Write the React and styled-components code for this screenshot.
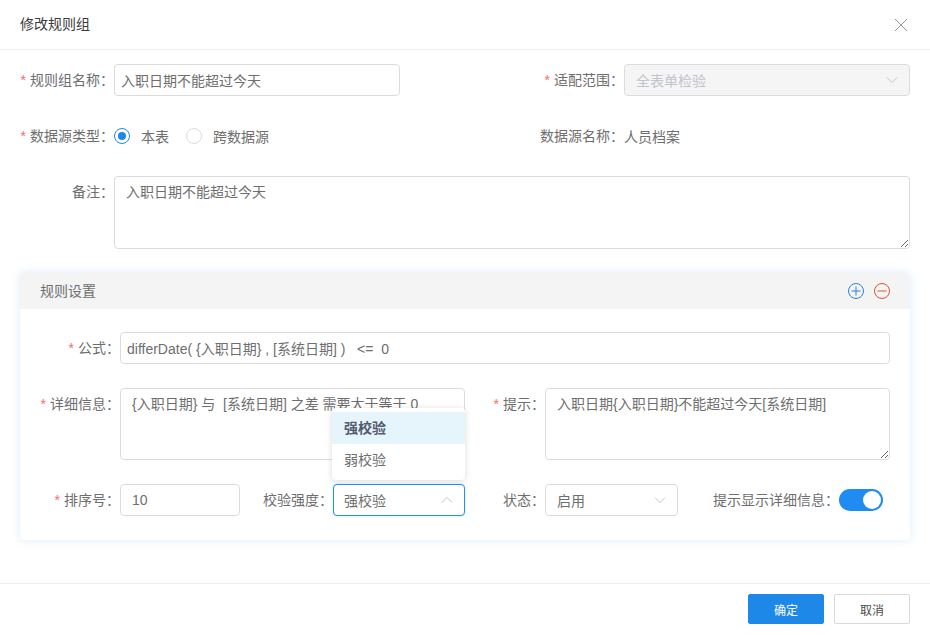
import React from 'react';
import styled, { createGlobalStyle } from 'styled-components';

const Global = createGlobalStyle`
	html, body {
		margin: 0;
		background: #fff;
	}
	* {
		box-sizing: border-box;
	}
	body, input, textarea, button {
		font-family: "Liberation Sans", "Noto Sans CJK SC", sans-serif;
		font-size: 14px;
	}
`;

const Dialog = styled.div`
	display: flex;
	flex-direction: column;
	width: 930px;
	height: 635px;
	overflow: hidden;
	color: #6e6e6e;
`;

const Header = styled.header`
	display: flex;
	align-items: center;
	justify-content: space-between;
	flex: 0 0 50px;
	padding: 0 23px 0 20px;
	border-bottom: 1px solid #ebeef5;
`;

const Title = styled.h1`
	margin: 0;
	font-size: 14px;
	font-weight: 400;
	line-height: 49px;
	color: #3a3a3a;
`;

const Body = styled.main`
	flex: 1;
	padding: 14px 20px 0;
`;

const Row = styled.div`
	display: flex;
	align-items: ${p => p.$top ? 'flex-start' : 'center'};
	min-height: 32px;
	margin-bottom: ${p => p.$gap || 0}px;
`;

const Cell = styled.div`
	display: flex;
	align-items: center;
	flex: ${p => p.$wide ? '1' : '0 0 380px'};
`;

const Label = styled.label`
	flex: 0 0 ${p => p.$width}px;
	line-height: 32px;
	text-align: right;
	white-space: nowrap;
`;

const Star = styled.span`
	margin-right: 4px;
	color: #f56c6c;
`;

const Input = styled.input`
	flex: ${p => p.$width ? `0 0 ${p.$width}px` : '1'};
	min-width: 0;
	height: 32px;
	padding: 0 ${p => p.$pad || 6}px;
	border: 1px solid #dcdcdc;
	border-radius: 4px;
	outline: none;
	color: #6e6e6e;
	white-space: pre;
`;

const TextArea = styled.textarea`
	display: block;
	flex: 1;
	min-width: 0;
	height: ${p => p.$height}px;
	padding: 5px 11px;
	border: 1px solid #dcdcdc;
	border-radius: 4px;
	outline: none;
	line-height: 20px;
	color: #6e6e6e;
	resize: vertical;
`;

const SelectBox = styled.div`
	position: relative;
	display: flex;
	align-items: center;
	justify-content: space-between;
	flex: 0 0 ${p => p.$width}px;
	height: 32px;
	padding: 0 11px 0 ${p => p.$open ? 10 : 11}px;
	border: 1px solid ${p => p.$open ? '#2d8fe0' : '#dcdcdc'};
	border-radius: 4px;
	background: ${p => p.$disabled ? '#f5f5f5' : '#fff'};
	color: ${p => p.$disabled ? '#c0c4cc' : '#6e6e6e'};
	box-shadow: ${p => p.$open ? '0 0 3px rgba(30, 136, 232, .25)' : 'none'};
`;

const Menu = styled.ul`
	position: absolute;
	left: -2px;
	right: -1px;
	bottom: 35px;
	margin: 0;
	padding: 4px 0;
	list-style: none;
	border-radius: 4px;
	background: #fff;
	box-shadow: 0 1px 6px rgba(0, 0, 0, .15);
`;

const MenuItem = styled.li`
	height: 32px;
	padding: 0 12px;
	line-height: 32px;
	font-weight: ${p => p.$active ? 700 : 400};
	color: ${p => p.$active ? '#515a6e' : '#6e6e6e'};
	background: ${p => p.$active ? '#e6f4fc' : '#fff'};
`;

const RadioDot = styled.span`
	display: flex;
	align-items: center;
	justify-content: center;
	width: 16px;
	height: 16px;
	margin-right: 11px;
	border: 1px solid ${p => p.$checked ? '#1e88e8' : '#dcdcdc'};
	border-radius: 50%;

	&::after {
		content: "";
		display: ${p => p.$checked ? 'block' : 'none'};
		width: 8px;
		height: 8px;
		border-radius: 50%;
		background: #1e88e8;
	}
`;

const RadioText = styled.span`
	margin-right: 17px;
`;

const Card = styled.section`
	margin-top: 24px;
	border-radius: 4px;
	background: #fff;
	box-shadow: 0 0 10px rgba(30, 136, 232, .16);
`;

const CardHead = styled.div`
	display: flex;
	align-items: center;
	justify-content: space-between;
	height: 36px;
	padding: 0 20px;
	border-radius: 4px 4px 0 0;
	background: #f4f4f5;
`;

const CardTitle = styled.span`
	height: 36px;
	line-height: 36px;
`;

const CardTools = styled.div`
	display: flex;
	gap: 10px;
`;

const CardBody = styled.div`
	display: flex;
	flex-direction: column;
	gap: 24px;
	padding: 23px 20px 24px;
`;

const Toggle = styled.span`
	display: flex;
	align-items: center;
	justify-content: flex-end;
	flex: 0 0 44px;
	height: 22px;
	padding: 2px;
	border-radius: 11px;
	background: #1e8cf0;

	&::after {
		content: "";
		width: 18px;
		height: 18px;
		border-radius: 50%;
		background: #fff;
	}
`;

const Footer = styled.footer`
	display: flex;
	justify-content: flex-end;
	gap: 10px;
	flex: 0 0 52px;
	padding: 10px 20px 0;
	border-top: 1px solid #ebeef5;
`;

const Button = styled.button`
	width: 76px;
	height: 30px;
	padding: 0;
	border: 1px solid ${p => p.$primary ? '#1e88e8' : '#d9d9d9'};
	border-radius: 2px;
	background: ${p => p.$primary ? '#1e88e8' : '#fff'};
	color: ${p => p.$primary ? '#fff' : '#4a4a4a'};
	font-size: 12px;
`;

const Chevron = ({ up }) => (
	<svg width="12" height="8" viewBox="0 0 12 8" fill="none" stroke="#c0c4cc" strokeWidth="1">
		<path d={up ? 'M1 6.5 L6 1.5 L11 6.5' : 'M1 1.5 L6 6.5 L11 1.5'} />
	</svg>
);

const Req = ({ width, children }) => (
	<Label $width={width}><Star>*</Star>{children}</Label>
);

const App = () => (
	<Dialog>
		<Global />
		<Header>
			<Title>修改规则组</Title>
			<svg width="12" height="12" viewBox="0 0 12 12" stroke="#999" strokeWidth="1">
				<path d="M0 0 L12 12 M12 0 L0 12" />
			</svg>
		</Header>
		<Body>
			<Row $gap={24}>
				<Cell>
					<Req width={94}>规则组名称：</Req>
					<Input $width={286} readOnly value="入职日期不能超过今天" />
				</Cell>
				<Cell $wide>
					<Req width={224}>适配范围：</Req>
					<SelectBox $width={286} $disabled>
						全表单检验
						<Chevron />
					</SelectBox>
				</Cell>
			</Row>
			<Row $gap={24}>
				<Cell>
					<Req width={94}>数据源类型：</Req>
					<RadioDot $checked />
					<RadioText>本表</RadioText>
					<RadioDot />
					<RadioText>跨数据源</RadioText>
				</Cell>
				<Cell $wide>
					<Label $width={224}>数据源名称：</Label>
					<span>人员档案</span>
				</Cell>
			</Row>
			<Row $top>
				<Label $width={94}>备注：</Label>
				<TextArea $height={73} readOnly value="入职日期不能超过今天" />
			</Row>
			<Card>
				<CardHead>
					<CardTitle>规则设置</CardTitle>
					<CardTools>
						<svg width="16" height="16" viewBox="0 0 16 16" fill="none" stroke="#2c82d8" strokeWidth="1">
							<circle cx="8" cy="8" r="7.5" />
							<path d="M3.5 8 H12.5 M8 3.5 V12.5" />
						</svg>
						<svg width="16" height="16" viewBox="0 0 16 16" fill="none" stroke="#d9572e" strokeWidth="1">
							<circle cx="8" cy="8" r="7.5" />
							<path d="M3.5 8 H12.5" />
						</svg>
					</CardTools>
				</CardHead>
				<CardBody>
					<Row>
						<Req width={80}>公式：</Req>
						<Input readOnly value="differDate( {入职日期} , [系统日期] )   <=  0" />
					</Row>
					<Row $top>
						<Req width={80}>详细信息：</Req>
						<TextArea $height={72} readOnly value="{入职日期} 与  [系统日期] 之差 需要大于等于 0" />
						<Req width={80}>提示：</Req>
						<TextArea $height={72} readOnly value="入职日期{入职日期}不能超过今天[系统日期]" />
					</Row>
					<Row>
						<Req width={80}>排序号：</Req>
						<Input $width={120} $pad={11} readOnly value="10" />
						<Label $width={93}>校验强度：</Label>
						<SelectBox $width={132} $open>
							强校验
							<Chevron up />
							<Menu>
								<MenuItem $active>强校验</MenuItem>
								<MenuItem>弱校验</MenuItem>
							</Menu>
						</SelectBox>
						<Label $width={80}>状态：</Label>
						<SelectBox $width={133}>
							启用
							<Chevron />
						</SelectBox>
						<Label $width={161}>提示显示详细信息：</Label>
						<Toggle />
					</Row>
				</CardBody>
			</Card>
		</Body>
		<Footer>
			<Button $primary>确定</Button>
			<Button>取消</Button>
		</Footer>
	</Dialog>
);

export default App;
